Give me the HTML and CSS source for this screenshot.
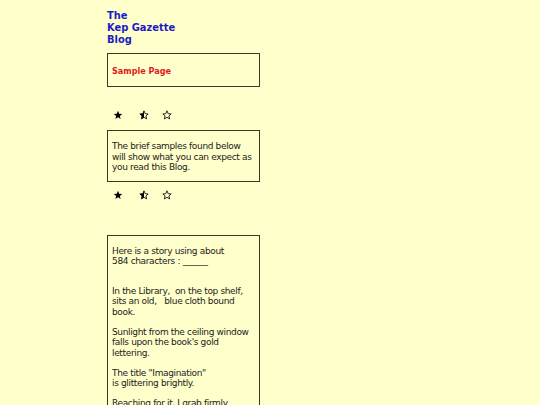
FILE: index.html
```
<!DOCTYPE html>
<html>
<head>
<meta charset="utf-8">
<link rel="stylesheet" href="styles.css">
</head>
<body>
<div class="col">
  <h1 class="title">The<br>Kep Gazette<br>Blog</h1>
  <div class="box box-head"><span class="sample">Sample Page</span></div>
  <div class="stars stars-top">
    <svg class="star s1" viewBox="0 0 24 24" width="10" height="10"><path d="M12 2l2.9 6.9 7.1.6-5.4 4.7 1.7 7.2L12 17.6 5.7 21.4l1.7-7.2L2 9.5l7.1-.6z" fill="#000"/></svg>
    <svg class="star s2" viewBox="0 0 24 24" width="10" height="10"><path d="M12 2l2.9 6.9 7.1.6-5.4 4.7 1.7 7.2L12 17.6 5.7 21.4l1.7-7.2L2 9.5l7.1-.6z" fill="none" stroke="#000" stroke-width="2" stroke-linejoin="round"/><path d="M12 2L9.1 8.9 2 9.5l5.4 4.7-1.7 7.2L12 17.6z" fill="#000"/></svg>
    <svg class="star s3" viewBox="0 0 24 24" width="10" height="10"><path d="M12 2l2.9 6.9 7.1.6-5.4 4.7 1.7 7.2L12 17.6 5.7 21.4l1.7-7.2L2 9.5l7.1-.6z" fill="none" stroke="#000" stroke-width="2" stroke-linejoin="round"/></svg>
  </div>
  <div class="box box-intro">
    <p>The brief samples found below will show what you can expect as you read this Blog.</p>
  </div>
  <div class="stars stars-bottom">
    <svg class="star s1" viewBox="0 0 24 24" width="10" height="10"><path d="M12 2l2.9 6.9 7.1.6-5.4 4.7 1.7 7.2L12 17.6 5.7 21.4l1.7-7.2L2 9.5l7.1-.6z" fill="#000"/></svg>
    <svg class="star s2" viewBox="0 0 24 24" width="10" height="10"><path d="M12 2l2.9 6.9 7.1.6-5.4 4.7 1.7 7.2L12 17.6 5.7 21.4l1.7-7.2L2 9.5l7.1-.6z" fill="none" stroke="#000" stroke-width="2" stroke-linejoin="round"/><path d="M12 2L9.1 8.9 2 9.5l5.4 4.7-1.7 7.2L12 17.6z" fill="#000"/></svg>
    <svg class="star s3" viewBox="0 0 24 24" width="10" height="10"><path d="M12 2l2.9 6.9 7.1.6-5.4 4.7 1.7 7.2L12 17.6 5.7 21.4l1.7-7.2L2 9.5l7.1-.6z" fill="none" stroke="#000" stroke-width="2" stroke-linejoin="round"/></svg>
  </div>
  <div class="box box-story">
    <p class="lead">Here is a story using about<br>584 characters : ______</p>
    <p>In the Library,&nbsp; on the top shelf,<br>sits an old,&nbsp;&nbsp; blue cloth bound<br>book.</p>
    <p>Sunlight from the ceiling window<br>falls upon the book's gold<br>lettering.</p>
    <p>The title "Imagination"<br>is glittering brightly.</p>
    <p>Reaching for it, I grab firmly<br>and pull it down.</p>
  </div>
</div>
</body>
</html>
```

FILE: styles.css
```
html, body {
  margin: 0;
  padding: 0;
  background: #ffffcc;
}
body {
  font-family: "DejaVu Sans", Verdana, sans-serif;
  color: #222218;
}
.col {
  width: 153px;
  margin-left: 107px;
  padding-top: 10px;
}
.title {
  margin: 0;
  font-family: "DejaVu Sans Condensed", "DejaVu Sans", sans-serif;
  font-stretch: condensed;
  font-size: 11px;
  line-height: 12px;
  font-weight: bold;
  color: #1c1cc4;
}
.box {
  border: 1px solid #3a3a2a;
  box-sizing: border-box;
}
.box-head {
  margin-top: 7px;
  height: 34px;
  display: flex;
  align-items: center;
  padding: 2px 4px 0 4px;
}
.sample {
  font-family: "DejaVu Sans Condensed", "DejaVu Sans", sans-serif;
  font-stretch: condensed;
  color: #e01a1a;
  font-size: 9px;
  font-weight: bold;
}
.stars {
  display: flex;
  height: 10px;
  align-items: center;
  padding-left: 6px;
}
.star {
  display: block;
  flex: none;
}
.s2 {
  margin-left: 16px;
}
.s3 {
  margin-left: 13px;
}
.stars-top {
  margin-top: 23px;
  margin-bottom: 10px;
}
.stars-bottom {
  margin-top: 8px;
  margin-bottom: 35px;
}
.box p {
  margin: 0;
  font-size: 9px;
  line-height: 10.7px;
  letter-spacing: -0.35px;
}
.box-intro {
  padding: 10px 4px 7.5px 4px;
}
.box-story {
  padding: 10px 4px 10px 4px;
}
.box-story p {
  margin-top: 9px;
}
.box-story p.lead {
  margin-top: 0;
  margin-bottom: 18.5px;
}
```
